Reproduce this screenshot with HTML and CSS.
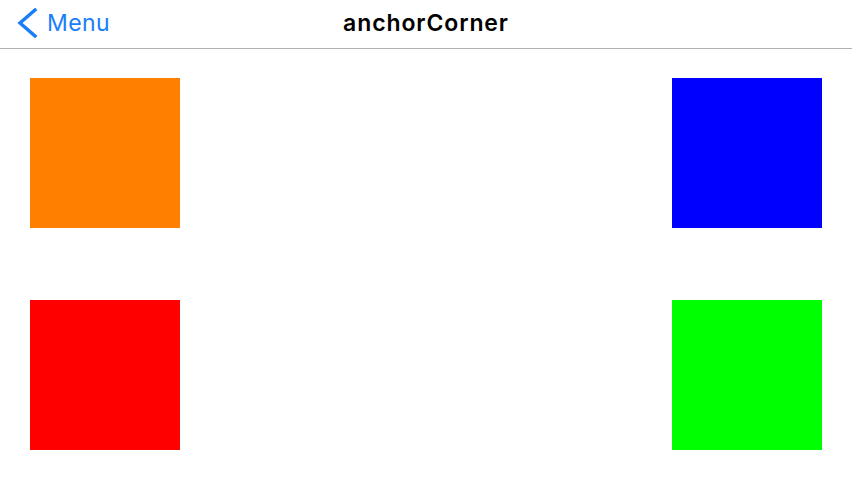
FILE: index.html
```html
<!DOCTYPE html>
<html>
<head>
<meta charset="utf-8">
<link rel="stylesheet" href="styles.css">
</head>
<body>
<header class="navbar">
  <a class="back">
    <svg class="chevron" width="22" height="30" viewBox="0 0 22 30">
      <polyline points="19,2 4,15 19,28" fill="none" stroke="#1a7dfa" stroke-width="3.4" stroke-linecap="square" stroke-linejoin="miter"/>
    </svg>
    <span class="back-label">Menu</span>
  </a>
  <h1 class="title">anchorCorner</h1>
</header>
<main class="canvas">
  <div class="box orange"></div>
  <div class="box blue"></div>
  <div class="box red"></div>
  <div class="box green"></div>
</main>
</body>
</html>
```
FILE: styles.css
```css
html, body {
  margin: 0;
  padding: 0;
  background: #ffffff;
  font-family: Inter, "Liberation Sans", sans-serif;
}
.navbar {
  position: relative;
  height: 48px;
  border-bottom: 1px solid #b2b2b2;
  display: flex;
  align-items: center;
  justify-content: center;
}
.back {
  position: absolute;
  left: 16px;
  top: 0;
  height: 48px;
  display: flex;
  align-items: center;
  gap: 9px;
  color: #1a7dfa;
}
.chevron {
  display: block;
  margin-top: -2px;
}
.back-label {
  font-size: 23px;
  font-weight: 400;
  letter-spacing: 0.4px;
  margin-top: -2px;
}
.title {
  margin: -2px 0 0 0;
  font-size: 23px;
  font-weight: 600;
  letter-spacing: 0.9px;
  color: #000;
}
.canvas {
  padding: 29px 30px;
  display: grid;
  grid-template-columns: 150px 150px;
  grid-template-rows: 150px 150px;
  justify-content: space-between;
  row-gap: 72px;
}
.box { width: 150px; height: 150px; }
.orange { background: #ff8000; }
.blue { background: #0000ff; }
.red { background: #ff0000; }
.green { background: #00ff00; }
```
